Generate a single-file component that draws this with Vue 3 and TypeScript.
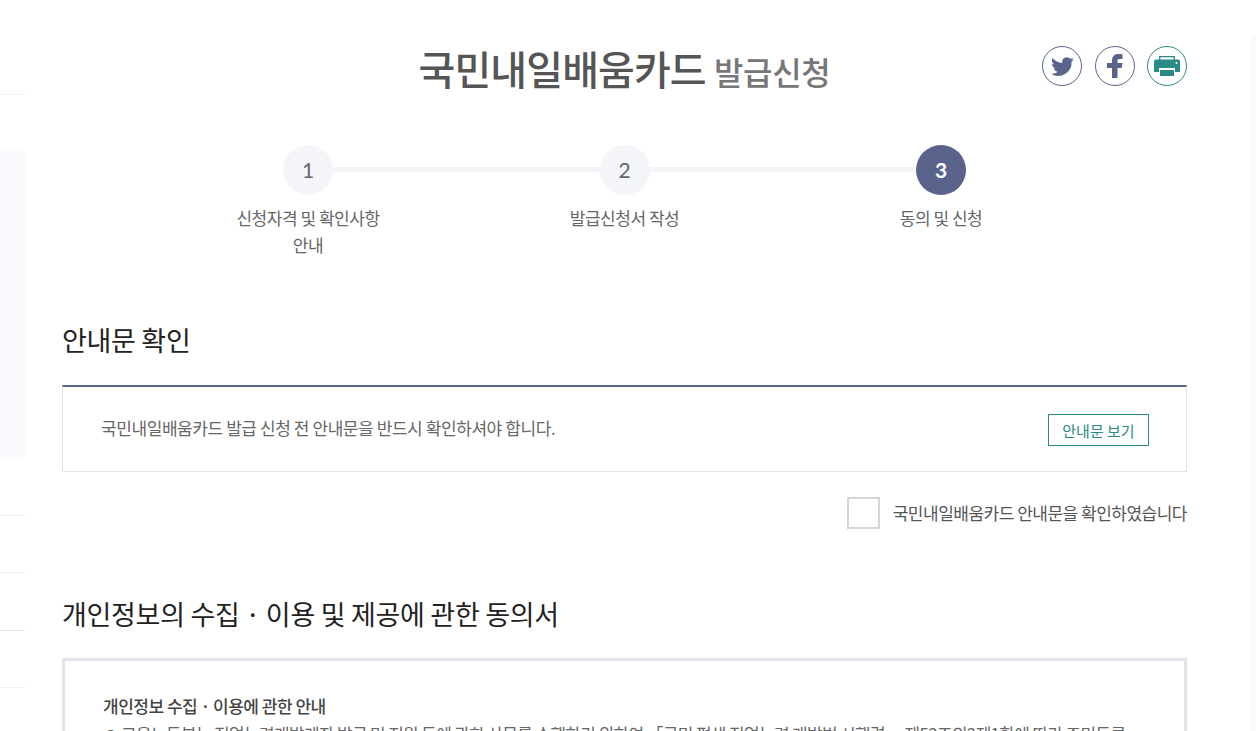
<script setup lang="ts">
interface Step {
  no: number;
  label: string;
  active?: boolean;
}

const steps: Step[] = [
  { no: 1, label: "신청자격 및 확인사항 안내" },
  { no: 2, label: "발급신청서 작성" },
  { no: 3, label: "동의 및 신청", active: true },
];
</script>

<template>
  <div class="page">
    <aside class="side">
      <div class="side__row side__row--first"></div>
      <div class="side__gap"></div>
      <div class="side__panel"></div>
      <div class="side__row side__row--tall"></div>
      <div class="side__row"></div>
      <div class="side__row side__row--dark"></div>
      <div class="side__row"></div>
    </aside>

    <main class="main">
      <header class="head">
        <h1 class="head__title">국민내일배움카드 <small>발급신청</small></h1>
        <div class="head__icons">
          <a class="icon" href="#" aria-label="트위터">
            <svg width="25" height="25" viewBox="0 0 24 24">
              <path fill="#5a638c" d="M23 5.300c-.8.4-1.700.6-2.600.7.9-.6 1.600-1.400 2-2.500-.9.5-1.800.9-2.900 1.100A4.500 4.500 0 0 0 11.800 8.700C8 8.500 4.700 6.700 2.500 3.900c-1.200 2.100-.6 4.700 1.400 6-.7 0-1.400-.2-2-.6 0 2.200 1.500 4.100 3.600 4.500-.7.200-1.400.2-2 .1.600 1.800 2.300 3.100 4.200 3.100A9 9 0 0 1 1 18.900 12.800 12.800 0 0 0 20.700 7.500c.9-.6 1.700-1.300 2.300-2.200z" />
            </svg>
          </a>
          <a class="icon" href="#" aria-label="페이스북">
            <svg width="16" height="24" viewBox="0 0 16 24">
              <path fill="#5a638c" d="M5 24V14H0V9h5V6.500C5 2.500 7.500 0 11 0c1.800 0 3.500.2 4.500.3V5h-2.800C11 5 10.500 5.800 10.500 7v2h5l-.8 5h-4.200v10z" />
            </svg>
          </a>
          <a class="icon icon--print" href="#" aria-label="인쇄">
            <svg width="26" height="20" viewBox="0 0 26 20">
              <path fill="none" stroke="#2a8a85" stroke-width="1.300" d="M5.700 4V.7h14.600V4" />
              <path fill="#2a8a85" d="M2 3.500h22a2 2 0 0 1 2 2V16h-26V5.500a2 2 0 0 1 2-2z" />
              <circle cx="22.500" cy="7" r="1" fill="#fff" />
              <path fill="#fff" d="M5 12h16v8H5z" />
              <path fill="#2a8a85" d="M6 14h14v6H6z" />
            </svg>
          </a>
        </div>
      </header>

      <ol class="steps">
        <li
          v-for="s in steps"
          :key="s.no"
          class="steps__item"
          :class="{ 'steps__item--active': s.active }"
        >
          <span class="steps__no">{{ s.no }}</span>
          <span class="steps__label">{{ s.label }}</span>
        </li>
      </ol>

      <h2 class="section-title">안내문 확인</h2>
      <div class="notice">
        <p class="notice__text">국민내일배움카드 발급 신청 전 안내문을 반드시 확인하셔야 합니다.</p>
        <button class="notice__btn" type="button">안내문 보기</button>
      </div>
      <label class="check">
        <input class="check__box" type="checkbox" />
        <span class="check__label">국민내일배움카드 안내문을 확인하였습니다</span>
      </label>

      <h2 class="section-title section-title--second">개인정보의 수집 · 이용 및 제공에 관한 동의서</h2>
      <div class="terms">
        <strong class="terms__head">개인정보 수집 · 이용에 관한 안내</strong>
        <p class="terms__text">ㅇ 고용노동부는 직업능력개발계좌 발급 및 지원 등에 관한 사무를 수행하기 위하여 「국민 평생 직업능력 개발법 시행령」 제52조의2제1항에 따라 주민등록</p>
      </div>
    </main>

    <aside class="right"></aside>
  </div>
</template>

<style>
html,
body {
  margin: 0;
  height: 731px;
  overflow: hidden;
  background: #fff;
}
</style>

<style scoped>
.page {
  display: flex;
  width: 1256px;
  height: 731px;
  overflow: hidden;
  font-family: "Noto Sans CJK KR", "Noto Sans", sans-serif;
  color: #444;
}

.side {
  flex: 0 0 25px;
  display: flex;
  flex-direction: column;
}

.side__row {
  flex: 0 0 57px;
  box-sizing: border-box;
  border-bottom: 1px solid #f3f3f3;
}

.side__row--first {
  flex-basis: 95px;
}

.side__row--tall {
  flex-basis: 59px;
}

.side__row--dark {
  flex-basis: 58px;
  border-bottom: 1px solid #e2e2e2;
}

.side__gap {
  flex: 0 0 56px;
}

.side__panel {
  flex: 0 0 306px;
  background: #f8f9fd;
}

.main {
  flex: 0 0 1125px;
  margin-left: 37px;
}

.head {
  position: relative;
  height: 145px;
  box-sizing: border-box;
  padding-top: 40px;
  text-align: center;
}

.head__title {
  margin: 0;
  font-size: 40px;
  font-weight: 500;
  line-height: 56px;
  letter-spacing: -0.9px;
  color: #555;
}

.head__title small {
  font-size: 32px;
  font-weight: 500;
  color: #777;
  letter-spacing: -0.3px;
}

.head__icons {
  position: absolute;
  top: 46px;
  right: 0;
  display: flex;
  gap: 13px;
}

.icon {
  display: flex;
  align-items: center;
  justify-content: center;
  width: 40px;
  height: 40px;
  box-sizing: border-box;
  border: 1px solid #5a638c;
  border-radius: 50%;
}

.icon--print {
  margin-left: -1px;
  border-color: #2a8a85;
}

.steps {
  display: flex;
  justify-content: space-between;
  width: 781px;
  height: 175px;
  margin: 0 0 0 172px;
  padding: 0;
  list-style: none;
}

.steps__item {
  position: relative;
  display: flex;
  flex-direction: column;
  align-items: center;
  width: 148px;
}

.steps__item:not(:last-child)::after {
  content: "";
  position: absolute;
  top: 22px;
  left: 74px;
  width: 316px;
  height: 5px;
  background: #f3f5f9;
}

.steps__no {
  position: relative;
  z-index: 1;
  width: 50px;
  height: 50px;
  border-radius: 50%;
  background: #f3f5f9;
  color: #666;
  font-size: 21px;
  line-height: 50px;
  text-align: center;
  font-family: Lato, "Noto Sans", sans-serif;
}

.steps__label {
  margin-top: 9px;
  font-size: 17px;
  line-height: 27px;
  letter-spacing: -0.47px;
  color: #666;
  text-align: center;
}

.steps__item--active .steps__no {
  background: #5a638c;
  color: #fff;
  font-weight: 700;
}

.section-title {
  margin: 0;
  font-size: 27px;
  font-weight: 400;
  line-height: 40px;
  letter-spacing: -0.3px;
  color: #222;
}

.notice {
  display: flex;
  align-items: center;
  justify-content: space-between;
  height: 87px;
  box-sizing: border-box;
  margin-top: 25px;
  padding: 0 37px 0 38px;
  border: 1px solid #e2e2e2;
  border-top: 2px solid #5a638c;
}

.notice__text {
  margin: 0 0 3px;
  font-size: 17px;
  letter-spacing: -0.42px;
  color: #666;
}

.notice__btn {
  width: 101px;
  height: 32px;
  margin-top: 2px;
  padding: 0;
  border: 1px solid #2a8a85;
  background: #fff;
  color: #2a8a85;
  font: inherit;
  font-size: 15px;
}

.check {
  display: flex;
  align-items: center;
  justify-content: flex-end;
  gap: 13px;
  margin-top: 25px;
  font-size: 17px;
  letter-spacing: -0.5px;
  color: #555;
}

.check__label {
  margin-bottom: 2px;
}

.check__box {
  appearance: none;
  width: 33px;
  height: 32px;
  margin: 0;
  border: 2px solid #d5d5d5;
  background: #fff;
}

.section-title--second {
  margin-top: 65px;
}

.terms {
  box-sizing: border-box;
  height: 120px;
  margin-top: 24px;
  padding: 31px 38px 0;
  border: 3px solid #e1e4ea;
}

.terms__head {
  display: block;
  font-size: 17px;
  font-weight: 500;
  line-height: 28px;
  letter-spacing: -0.5px;
  color: #444;
}

.terms__text {
  margin: 0;
  font-size: 17px;
  line-height: 28px;
  letter-spacing: -0.67px;
  color: #666;
  white-space: nowrap;
}

.right {
  flex: 0 0 6px;
  height: 700px;
  margin: 37px 0 0 63px;
  border-top-left-radius: 8px;
  background: #f9f9f9;
}
</style>
